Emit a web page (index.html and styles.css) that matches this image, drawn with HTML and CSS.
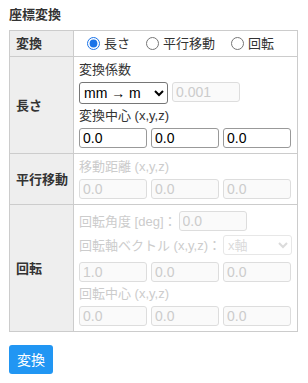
FILE: index.html
```html
<!DOCTYPE html>
<html lang="ja">
<head>
    <meta charset="UTF-8">
    <meta name="viewport" content="width=device-width, initial-scale=1.0">
    <title>座標変換</title>
    <link rel="stylesheet" href="styles.css">
</head>
<body>
    <h3 class="title">座標変換</h3>

    <table class="conv-table">
        <colgroup>
            <col class="col-head">
            <col>
        </colgroup>
        <tr class="row-mode">
            <th>変換</th>
            <td>
                <div class="radios">
                    <label><input type="radio" name="mode" value="scale" checked>長さ</label>
                    <label><input type="radio" name="mode" value="move">平行移動</label>
                    <label><input type="radio" name="mode" value="rotate">回転</label>
                </div>
            </td>
        </tr>
        <tr class="row-scale">
            <th>長さ</th>
            <td>
                <div class="lbl">変換係数</div>
                <div class="fields first">
                    <select class="unit">
                        <option>mm → m</option>
                        <option>m → mm</option>
                    </select>
                    <input type="text" class="short" value="0.001" disabled>
                </div>
                <div class="lbl">変換中心 (x,y,z)</div>
                <div class="fields">
                    <input type="text" value="0.0">
                    <input type="text" value="0.0">
                    <input type="text" value="0.0">
                </div>
            </td>
        </tr>
        <tr class="row-move off">
            <th>平行移動</th>
            <td>
                <div class="lbl">移動距離 (x,y,z)</div>
                <div class="fields">
                    <input type="text" value="0.0" disabled>
                    <input type="text" value="0.0" disabled>
                    <input type="text" value="0.0" disabled>
                </div>
            </td>
        </tr>
        <tr class="row-rotate off">
            <th>回転</th>
            <td>
                <div class="inline">
                    <span>回転角度 [deg]：</span>
                    <input type="text" class="short" value="0.0" disabled>
                </div>
                <div class="inline">
                    <span>回転軸ベクトル (x,y,z)：</span>
                    <select class="axis" disabled>
                        <option>x軸</option>
                        <option>y軸</option>
                        <option>z軸</option>
                    </select>
                </div>
                <div class="fields vec">
                    <input type="text" value="1.0" disabled>
                    <input type="text" value="0.0" disabled>
                    <input type="text" value="0.0" disabled>
                </div>
                <div class="lbl">回転中心 (x,y,z)</div>
                <div class="fields">
                    <input type="text" value="0.0" disabled>
                    <input type="text" value="0.0" disabled>
                    <input type="text" value="0.0" disabled>
                </div>
            </td>
        </tr>
    </table>

    <button type="button" class="run-btn">変換</button>
</body>
</html>
```

FILE: styles.css
```css
body {
    margin: 0;
    padding: 5px 9px;
    font-family: "Liberation Sans", "Noto Sans CJK JP", sans-serif;
    font-size: 13px;
    color: #333;
    background: #fff;
}
.title {
    margin: 0 0 6px;
    font-size: 13px;
    font-weight: bold;
    line-height: 19px;
}
.conv-table {
    border-collapse: collapse;
    table-layout: fixed;
    width: 289px;
    line-height: 19px;
}
.col-head {
    width: 64px;
}
.conv-table th,
.conv-table td {
    border: 1px solid #ccc;
    white-space: nowrap;
}
.conv-table th {
    padding: 0 6px;
    background: #eee;
    text-align: left;
    font-weight: bold;
}
.conv-table td {
    padding: 3px 5px 5px;
}
.row-mode td {
    padding: 3px 5px;
}
.radios {
    display: flex;
    align-items: center;
    padding-left: 3px;
}
.radios label {
    display: flex;
    align-items: center;
    margin-right: 11px;
}
.radios input {
    width: 13px;
    height: 13px;
    margin: 0 4px 0 5px;
    accent-color: #1a73e8;
}
.lbl {
    height: 20px;
    line-height: 20px;
}
.fields {
    display: flex;
    gap: 4px;
    margin-top: 2px;
}
.fields.first {
    margin-bottom: 2px;
}
.fields input {
    width: 68px;
}
input[type="text"] {
    box-sizing: border-box;
    height: 20px;
    margin: 0;
    padding: 0 3px;
    border: 1px solid #999;
    border-radius: 3px;
    font-family: "Liberation Sans", sans-serif;
    font-size: 14px;
    color: #000;
}
input[type="text"]:disabled {
    border-color: #ddd;
    background: #fafafa;
    color: #ccc;
}
input.short {
    width: 68px;
}
select {
    box-sizing: border-box;
    height: 22px;
    margin: 0;
    border: 1px solid #767676;
    border-radius: 3px;
    background: #fff;
    font-family: "Liberation Sans", "Noto Sans CJK JP", sans-serif;
    font-size: 14px;
    color: #000;
}
.unit {
    width: 89px;
}
.axis {
    width: 70px;
    height: 20px;
    font-size: 13px;
}
select:disabled {
    border-color: #ddd;
    color: #ccc;
}
.off .lbl,
.off .inline span {
    color: #ccc;
}
.inline {
    display: flex;
    align-items: center;
    height: 20px;
    margin: 3px 0 4px;
}
.inline span {
    margin-right: 2px;
}
.fields.vec {
    margin-top: 7px;
    margin-bottom: 2px;
}
.run-btn {
    margin-top: 13px;
    padding: 0 8px;
    height: 29px;
    border: none;
    border-radius: 3px;
    background: #2196f3;
    color: #fff;
    font-family: "Noto Sans CJK JP", sans-serif;
    font-size: 14px;
    line-height: 29px;
    cursor: pointer;
}
```
